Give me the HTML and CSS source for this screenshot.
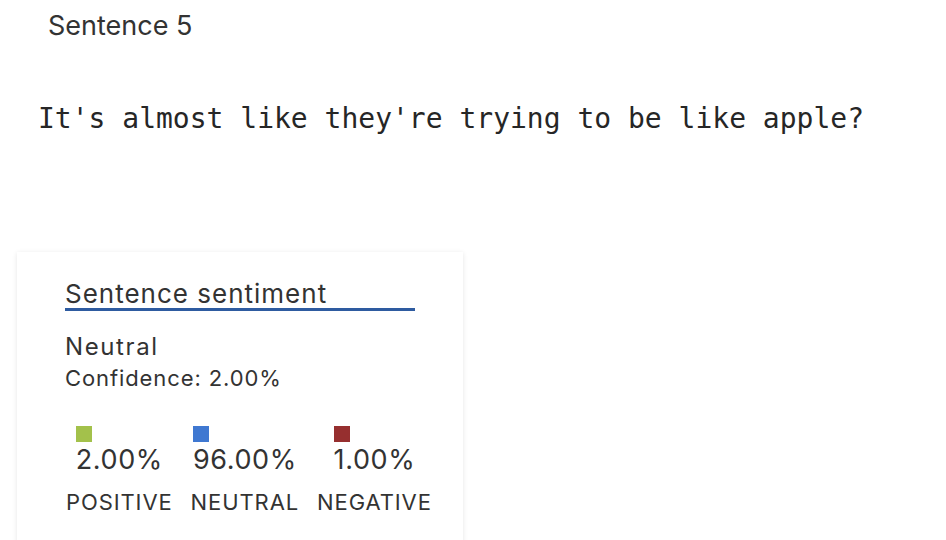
FILE: index.html
```html
<!DOCTYPE html>
<html>
<head>
<meta charset="utf-8">
<link rel="stylesheet" href="styles.css">
</head>
<body>
<div class="page">
  <div class="title">Sentence 5</div>
  <div class="sentence">It's almost like they're trying to be like apple?</div>
  <div class="card">
    <div class="card-heading">Sentence sentiment</div>
    <div class="label">Neutral</div>
    <div class="confidence">Confidence: 2.00%</div>
    <div class="scores">
      <div class="score">
        <div class="value"><span class="swatch pos"></span><span class="pct">2.00%</span></div>
        <div class="name">POSITIVE</div>
      </div>
      <div class="score">
        <div class="value"><span class="swatch neu"></span><span class="pct">96.00%</span></div>
        <div class="name">NEUTRAL</div>
      </div>
      <div class="score">
        <div class="value"><span class="swatch neg"></span><span class="pct">1.00%</span></div>
        <div class="name">NEGATIVE</div>
      </div>
    </div>
  </div>
</div>
</body>
</html>
```
FILE: styles.css
```css
html, body {
  margin: 0;
  padding: 0;
  background: #fff;
}
body {
  font-family: Inter, "Noto Sans", sans-serif;
  color: #333;
}
.page {
  padding: 10px 0 0 17px;
  height: 540px;
  box-sizing: border-box;
  overflow: hidden;
}
.title {
  font-size: 27px;
  line-height: 32px;
  padding-left: 31px;
}
.sentence {
  font-family: "DejaVu Sans Mono", monospace;
  font-size: 28px;
  line-height: 40px;
  margin-top: 57px;
  padding-left: 21px;
  white-space: nowrap;
  color: #262626;
}
.card {
  margin-top: 113px;
  width: 446px;
  height: 300px;
  background: #fff;
  box-shadow: 0 1px 5px rgba(0,0,0,0.1);
  padding: 27px 0 0 48px;
  box-sizing: border-box;
}
.card-heading {
  width: 350px;
  font-size: 26px;
  line-height: 29px;
  letter-spacing: 1px;
  border-bottom: 3px solid #2e5ba0;
  white-space: nowrap;
}
.label {
  font-size: 24px;
  line-height: 30px;
  letter-spacing: 1.6px;
  margin-top: 21px;
}
.confidence {
  font-size: 22px;
  line-height: 26px;
  letter-spacing: 0.9px;
  margin-top: 3px;
}
.scores {
  display: flex;
  gap: 18px;
  margin-top: 35px;
  margin-left: 1px;
}
.score {
  display: flex;
  flex-direction: column;
  align-items: center;
}
.value {
  display: flex;
  flex-direction: column;
  align-items: flex-start;
}
.pct {
  font-size: 27px;
  line-height: 30px;
  letter-spacing: 0.6px;
  margin-top: 3px;
}
.swatch {
  width: 16px;
  height: 16px;
  display: block;
}
.pos { background: #a3c14b; }
.neu { background: #3f78d1; }
.neg { background: #962f2f; }
.name {
  font-size: 22px;
  line-height: 26px;
  letter-spacing: 0.9px;
  margin-top: 14px;
}
```
